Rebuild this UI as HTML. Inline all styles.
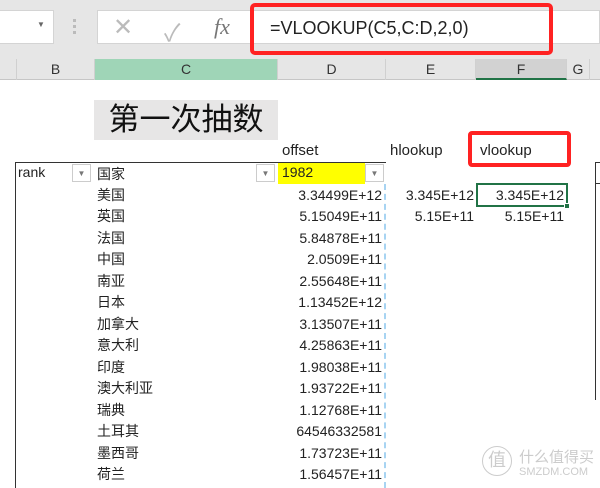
<!DOCTYPE html>
<html><head><meta charset="utf-8"><style>
*{margin:0;padding:0;box-sizing:border-box}
body{width:600px;height:488px;overflow:hidden;background:#fff;position:relative;font-family:"Liberation Sans","Noto Sans CJK SC",sans-serif;color:#222}
.a{position:absolute;white-space:nowrap}
.ch{position:absolute;top:59px;height:21px;font-size:14px;text-align:center;line-height:21px;color:#333;border-right:1px solid #d0d0d0}
.n{position:absolute;font-size:14px;text-align:right;line-height:20px}
.c{position:absolute;left:97px;font-size:14px;line-height:20px}
.dd{position:absolute;width:19px;height:18px;border:1px solid #ccc;background:#fff;font-size:8px;color:#777;text-align:center;line-height:17px}
</style></head><body>
<div class="a" style="left:0;top:0;width:600px;height:59px;background:#e6e6e6"></div>
<div class="a" style="left:0;top:10px;width:54px;height:34px;background:#fff;border:1px solid #d4d4d4;border-left:none"></div>
<div class="a" style="left:37px;top:20px;font-size:8px;color:#666">▼</div>
<div class="a" style="left:73px;top:19px;width:3px;height:3px;background:#bbb;box-shadow:0 6px #bbb,0 12px #bbb"></div>
<div class="a" style="left:97px;top:10px;width:503px;height:34px;background:#fff;border:1px solid #d4d4d4"></div>
<div class="a" style="left:113px;top:13px;font-size:24px;color:#bbb">✕</div>
<div class="a" style="left:164px;top:13px;font-size:24px;color:#bbb">✓</div>
<div class="a" style="left:214px;top:14px;font-size:22px;color:#777;font-family:'Liberation Serif',serif;font-style:italic">fx</div>
<div class="a" style="left:250px;top:3px;width:303px;height:52px;border:4px solid #f22;border-radius:5px"></div>
<div class="a" style="left:270px;top:18px;font-size:18px;color:#222">=VLOOKUP(C5,C:D,2,0)</div>
<div class="a" style="left:0;top:59px;width:600px;height:21px;background:#e6e6e6;border-bottom:1px solid #c6c6c6"></div>
<div class="ch" style="left:16px;width:79px;border-left:1px solid #d0d0d0">B</div>
<div class="ch" style="left:95px;width:183px;background:#9fd5b7">C</div>
<div class="ch" style="left:278px;width:108px">D</div>
<div class="ch" style="left:386px;width:90px">E</div>
<div class="ch" style="left:476px;width:91px;background:#d2d2d2;border-bottom:2px solid #217346">F</div>
<div class="ch" style="left:567px;width:23px">G</div>
<div class="a" style="left:94px;top:100px;width:184px;height:40px;background:#e7e6e6;font-size:31px;line-height:40px;text-align:center;color:#111">第一次抽数</div>
<div class="a" style="left:282px;top:142px;font-size:15px">offset</div>
<div class="a" style="left:390px;top:142px;font-size:15px">hlookup</div>
<div class="a" style="left:468px;top:131px;width:103px;height:36px;border:4px solid #f22;border-radius:4px"></div>
<div class="a" style="left:480px;top:142px;font-size:15px">vlookup</div>
<div class="a" style="left:15px;top:162px;width:371px;height:22px;border-top:1px solid #333"></div>
<div class="a" style="left:15px;top:162px;width:1px;height:326px;background:#333"></div>
<div class="a" style="left:278px;top:163px;width:87px;height:21px;background:#ff0"></div>
<div class="a" style="left:18px;top:164px;font-size:14px">rank</div>
<div class="a" style="left:97px;top:164px;font-size:14px">国家</div>
<div class="a" style="left:282px;top:164px;font-size:14px">1982</div>
<div class="dd" style="left:72px;top:164px">▼</div>
<div class="dd" style="left:256px;top:164px">▼</div>
<div class="dd" style="left:365px;top:164px">▼</div>
<div class="a" style="left:384px;top:184px;height:304px;border-left:2px dashed #a8d4f2"></div>
<div class="a" style="left:595px;top:162px;width:5px;height:238px;border-left:1px solid #333;border-top:1px solid #333"></div>
<div class="a" style="left:595px;top:183px;width:5px;border-top:1px solid #333"></div>
<div class="a" style="left:476px;top:183px;width:92px;height:24px;border:2px solid #217346"></div>
<div class="a" style="left:564px;top:203px;width:6px;height:6px;background:#217346;border:1px solid #fff"></div>
<div class="n" style="left:386px;width:88px;top:185px">3.345E+12</div>
<div class="n" style="left:476px;width:88px;top:185px">3.345E+12</div>
<div class="n" style="left:386px;width:88px;top:206px">5.15E+11</div>
<div class="n" style="left:476px;width:88px;top:206px">5.15E+11</div>
<div class="c" style="top:185px">美国</div><div class="n" style="left:278px;width:104px;top:185px">3.34499E+12</div>
<div class="c" style="top:206px">英国</div><div class="n" style="left:278px;width:104px;top:206px">5.15049E+11</div>
<div class="c" style="top:228px">法国</div><div class="n" style="left:278px;width:104px;top:228px">5.84878E+11</div>
<div class="c" style="top:249px">中国</div><div class="n" style="left:278px;width:104px;top:249px">2.0509E+11</div>
<div class="c" style="top:271px">南亚</div><div class="n" style="left:278px;width:104px;top:271px">2.55648E+11</div>
<div class="c" style="top:292px">日本</div><div class="n" style="left:278px;width:104px;top:292px">1.13452E+12</div>
<div class="c" style="top:314px">加拿大</div><div class="n" style="left:278px;width:104px;top:314px">3.13507E+11</div>
<div class="c" style="top:335px">意大利</div><div class="n" style="left:278px;width:104px;top:335px">4.25863E+11</div>
<div class="c" style="top:357px">印度</div><div class="n" style="left:278px;width:104px;top:357px">1.98038E+11</div>
<div class="c" style="top:378px">澳大利亚</div><div class="n" style="left:278px;width:104px;top:378px">1.93722E+11</div>
<div class="c" style="top:400px">瑞典</div><div class="n" style="left:278px;width:104px;top:400px">1.12768E+11</div>
<div class="c" style="top:421px">土耳其</div><div class="n" style="left:278px;width:104px;top:421px">64546332581</div>
<div class="c" style="top:443px">墨西哥</div><div class="n" style="left:278px;width:104px;top:443px">1.73723E+11</div>
<div class="c" style="top:464px">荷兰</div><div class="n" style="left:278px;width:104px;top:464px">1.56457E+11</div>
<div class="a" style="left:482px;top:446px;width:30px;height:30px;border:1.5px solid #ccc;border-radius:50%;font-size:18px;line-height:27px;text-align:center;color:#ccc">值</div>
<div class="a" style="left:519px;top:446px;font-size:15px;color:#ccc">什么值得买</div>
<div class="a" style="left:519px;top:466px;font-size:11px;color:#ccc">SMZDM.COM</div>
</body></html>
